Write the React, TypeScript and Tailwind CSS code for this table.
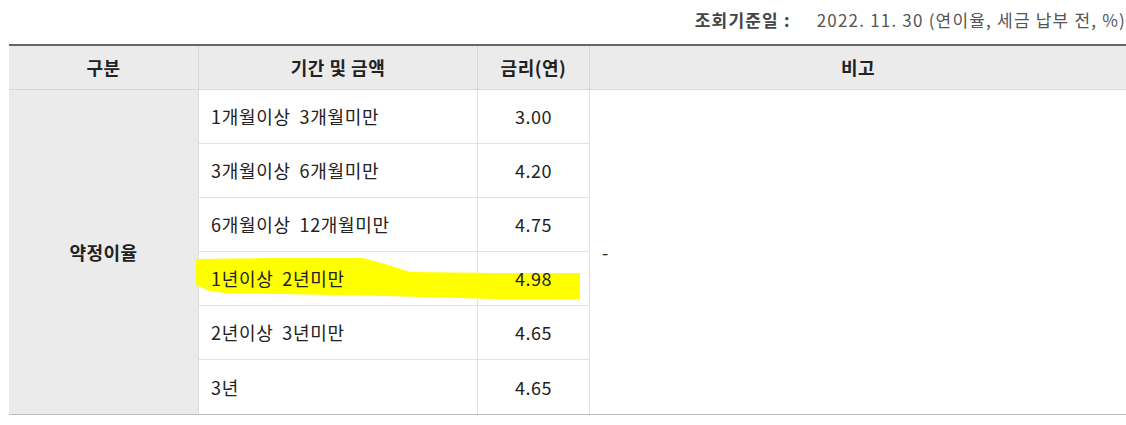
const rows = [
  { term: "1개월이상 3개월미만", rate: "3.00" },
  { term: "3개월이상 6개월미만", rate: "4.20" },
  { term: "6개월이상 12개월미만", rate: "4.75" },
  { term: "1년이상 2년미만", rate: "4.98", marked: true },
  { term: "2년이상 3년미만", rate: "4.65" },
  { term: "3년", rate: "4.65" },
];

function Highlight() {
  // yellow marker stroke over the 1년이상 row
  return (
    <svg
      className="pointer-events-none absolute left-[-4px] top-[-2px] z-0"
      width="390"
      height="56"
      viewBox="0 0 390 56"
    >
      <path
        d="M1 9 L80 8 L168 8 L190 14 L215 22 L300 23 L385 23 L385 49 L300 49 L190 46 L30 43 L15 41 L1 35 Z"
        fill="#ffff00"
      />
    </svg>
  );
}

export default function App() {
  return (
    <div
      className="w-[1126px] h-[425px] overflow-hidden bg-white pl-[9px] text-[#222]"
      style={{ fontFamily: '"Noto Sans CJK KR", "Noto Sans", sans-serif' }}
    >
      <div className="flex h-[44px] items-center justify-end pb-[4px] text-[17px] tracking-[1.2px] text-[#555]">
        <span className="font-bold text-[#444]">조회기준일 :</span>
        <span className="ml-[26px]">2022. 11. 30 (연이율, 세금 납부 전, %)</span>
      </div>

      <div className="grid grid-cols-[190px_279px_112px_1fr] border-t-2 border-[#666] border-b border-b-[#bbb] text-[18px] tracking-[0.5px]">
        <div className="flex h-[44px] items-center justify-center border-b border-r border-[#d6d6d6] bg-[#ebebeb] font-bold">
          구분
        </div>
        <div className="flex h-[44px] items-center justify-center border-b border-r border-[#d6d6d6] bg-[#ebebeb] font-bold">
          기간 및 금액
        </div>
        <div className="flex h-[44px] items-center justify-center border-b border-r border-[#d6d6d6] bg-[#ebebeb] font-bold">
          금리(연)
        </div>
        <div className="flex h-[44px] items-center justify-center border-b border-[#d6d6d6] bg-[#ebebeb] font-bold">
          비고
        </div>

        <div className="row-span-6 flex items-center justify-center border-r border-[#dcdcdc] bg-[#ebebeb] font-bold">
          약정이율
        </div>
        {rows.map((r, i) => (
          <div key={r.term} className="contents">
            <div
              className={
                "relative flex h-[54px] items-center border-r border-[#e2e2e2] pl-[12px] tracking-[0.7px] [word-spacing:4px] " +
                (i < rows.length - 1 ? "border-b" : "")
              }
            >
              {r.marked && <Highlight />}
              <span className="relative z-10">{r.term}</span>
            </div>
            <div
              className={
                "col-start-3 flex h-[54px] items-center justify-center border-r border-[#e2e2e2] " +
                (i < rows.length - 1 ? "border-b" : "")
              }
            >
              <span className="relative z-10">{r.rate}</span>
            </div>
            {i === 0 && (
              <div className="col-start-4 row-span-6 row-start-2 flex items-center pl-[12px]">
                -
              </div>
            )}
          </div>
        ))}
      </div>
    </div>
  );
}
